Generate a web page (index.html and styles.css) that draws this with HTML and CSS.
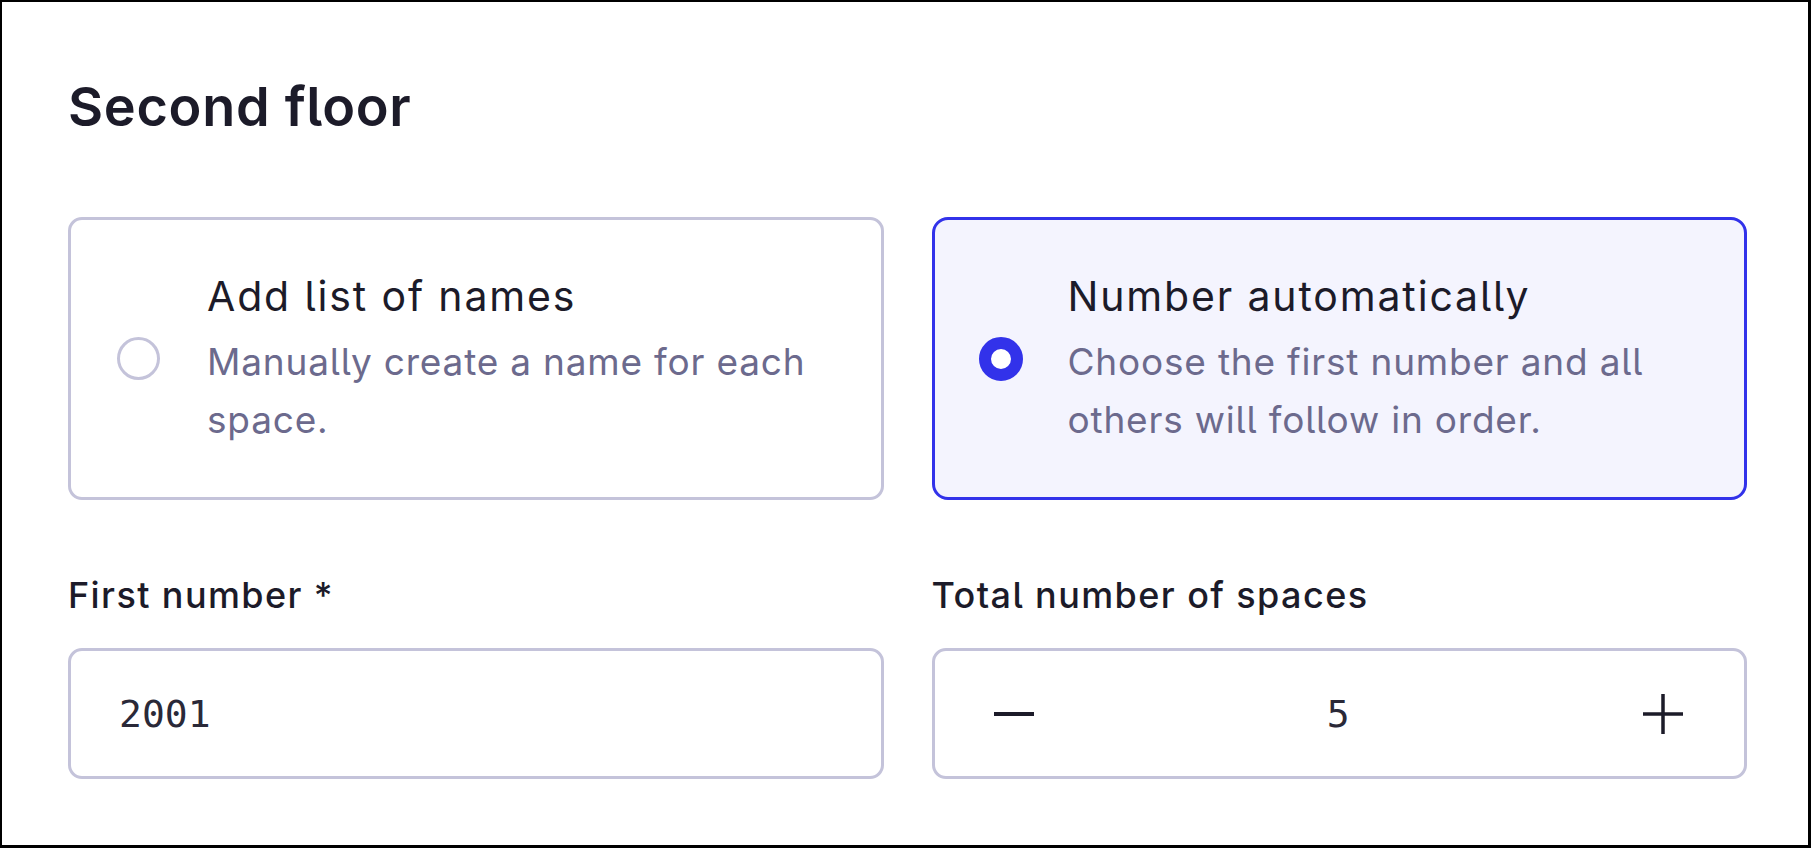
FILE: index.html
```html
<!DOCTYPE html>
<html lang="en">
<head>
  <meta charset="UTF-8" />
  <title>Second floor</title>
  <link rel="stylesheet" href="styles.css">
</head>
<body>
  <div class="frame">
    <h1 class="floor-title">Second floor</h1>

    <div class="choice-grid">
      <label class="choice">
        <span class="radio"></span>
        <span class="choice-text">
          <span class="choice-title">Add list of names</span>
          <span class="choice-desc">Manually create a name for each space.</span>
        </span>
      </label>
      <label class="choice selected">
        <span class="radio"></span>
        <span class="choice-text">
          <span class="choice-title">Number automatically</span>
          <span class="choice-desc">Choose the first number and all others will follow in order.</span>
        </span>
      </label>
    </div>

    <div class="field-grid">
      <div class="field">
        <div class="field-label">First number *</div>
        <input class="text-input" type="text" value="2001" />
      </div>
      <div class="field">
        <div class="field-label">Total number of spaces</div>
        <div class="stepper">
          <button class="step-btn" type="button" aria-label="Decrease">
            <svg width="42" height="42" viewBox="0 0 42 42"><path d="M1 21h40" stroke="currentColor" stroke-width="4" /></svg>
          </button>
          <span class="step-value">5</span>
          <button class="step-btn" type="button" aria-label="Increase">
            <svg width="42" height="42" viewBox="0 0 42 42"><path d="M1 21h40M21 1v40" stroke="currentColor" stroke-width="3.5" /></svg>
          </button>
        </div>
      </div>
    </div>
  </div>
</body>
</html>
```

FILE: styles.css
```css
:root {
  --text-dark: #1c1b29;
  --text-muted: #6c6a8d;
  --line: #c4c3da;
  --accent: #3232ea;
  --accent-bg: #f4f4fe;
}

* {
  box-sizing: border-box;
  margin: 0;
  padding: 0;
}

body {
  font-family: 'Inter', 'Noto Sans', sans-serif;
  font-feature-settings: "cv05";
  color: var(--text-dark);
  background: #fff;
}

.frame {
  height: 848px;
  border: 2px solid #000;
  border-right-width: 3px;
  border-bottom-width: 3px;
  padding: 72px 61px 0 66px;
}

.floor-title {
  font-size: 54px;
  font-weight: 600;
  line-height: 65px;
  letter-spacing: 0.7px;
}

/* Option cards */
.choice-grid {
  display: grid;
  grid-template-columns: 1fr 1fr;
  gap: 48px;
  margin-top: 78px;
}

.choice {
  display: flex;
  align-items: center;
  gap: 47px;
  padding: 48px 30px 48px 46px;
  border: 3px solid var(--line);
  border-radius: 14px;
  min-height: 283px;
  cursor: pointer;
}

.choice.selected {
  border-color: var(--accent);
  background: var(--accent-bg);
  border-radius: 16px;
  padding-left: 44px;
  gap: 45px;
}

.radio {
  flex: none;
  width: 43px;
  height: 43px;
  border-radius: 50%;
  border: 3px solid var(--line);
  background: #fff;
}

.selected .radio {
  width: 44px;
  height: 44px;
  border: 12px solid var(--accent);
}

.choice-text {
  display: flex;
  flex-direction: column;
  gap: 8px;
}

.choice-title {
  font-size: 41px;
  font-weight: 400;
  line-height: 57px;
  letter-spacing: 1.85px;
}

.choice-desc {
  font-size: 37px;
  line-height: 58px;
  letter-spacing: 0.8px;
  color: var(--text-muted);
}

/* Inputs */
.field-grid {
  display: grid;
  grid-template-columns: 1fr 1fr;
  gap: 48px;
  margin-top: 68px;
}

.field-label {
  font-size: 36px;
  font-weight: 500;
  line-height: 54px;
  letter-spacing: 1.4px;
  margin-bottom: 26px;
}

.text-input,
.stepper {
  width: 100%;
  height: 131px;
  border: 3px solid var(--line);
  border-radius: 14px;
  background: #fff;
}

.text-input {
  font-family: 'DejaVu Sans Mono', monospace;
  font-size: 38px;
  color: #2a2938;
  padding: 0 48px;
  outline: none;
}

.stepper {
  display: flex;
  align-items: center;
  justify-content: space-between;
  padding: 0 60px 0 58px;
}

.step-btn {
  border: 0;
  background: none;
  color: var(--text-dark);
  display: flex;
  cursor: pointer;
}

.step-value {
  font-family: 'DejaVu Sans Mono', monospace;
  font-size: 38px;
  color: #2a2938;
}
```
